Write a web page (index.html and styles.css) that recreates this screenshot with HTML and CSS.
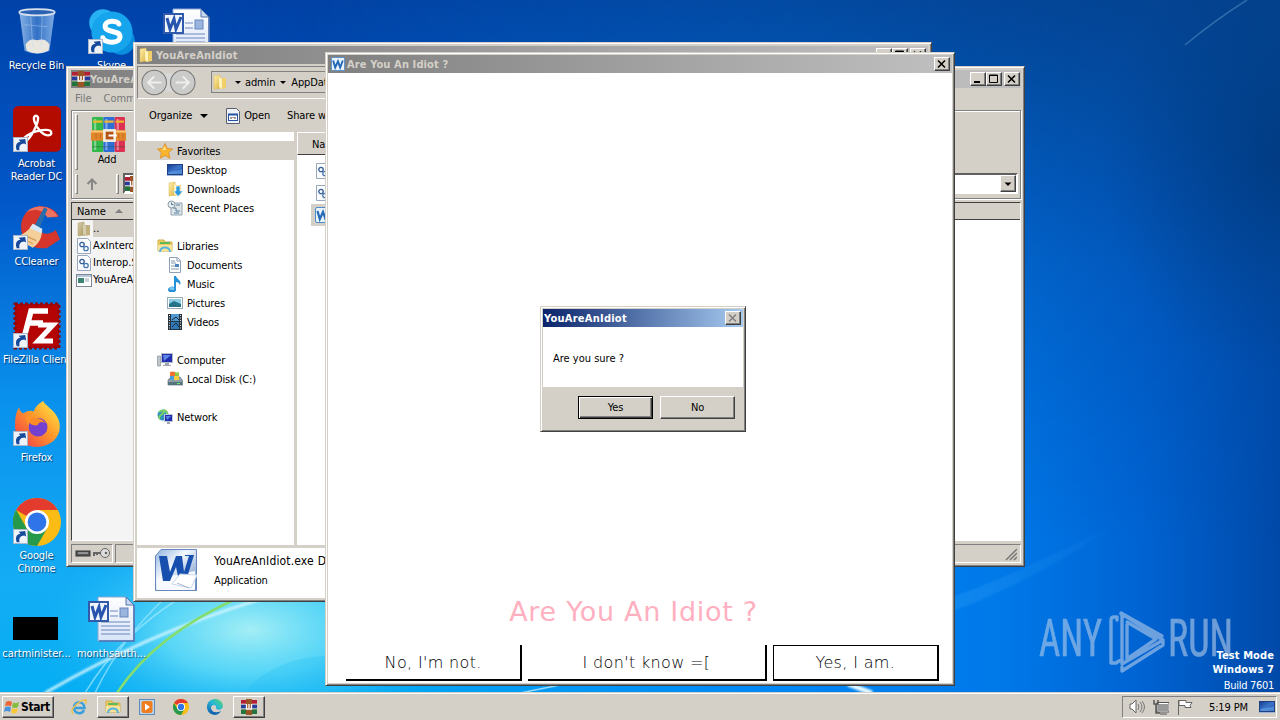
FILE: index.html
```html
<!DOCTYPE html>
<html lang="en">
<head>
    <meta charset="UTF-8">
    <meta name="viewport" content="width=device-width, initial-scale=1.0">
    <title>Desktop</title>
    <link rel="stylesheet" href="styles.css">
</head>
<body>
    <!-- icons -->
    <svg class="sprite" width="0" height="0">
        <defs>
            <linearGradient id="gFolder" x1="0" x2="1" y2="1"><stop offset="0" stop-color="#fff3ae"/><stop offset="1" stop-color="#d9ad3c"/></linearGradient>
            <linearGradient id="gScreen" x1="0" y1="0" x2="1" y2="1"><stop offset="0" stop-color="#123b91"/><stop offset=".5" stop-color="#3b74c9"/><stop offset="1" stop-color="#1747a0"/></linearGradient>
            <linearGradient id="gPage" x1="0" x2="0" y2="1"><stop offset="0" stop-color="#fff"/><stop offset="1" stop-color="#d7e4f8"/></linearGradient>
            <linearGradient id="gFox" x1="1" y1="0" x2="0" y2="1"><stop offset="0" stop-color="#fff44f"/><stop offset=".45" stop-color="#ff9a2a"/><stop offset="1" stop-color="#f0304c"/></linearGradient>
            <linearGradient id="gEdge" x1="1" y1="0" x2="0" y2="1"><stop offset="0" stop-color="#5bd668"/><stop offset=".45" stop-color="#27b7d7"/><stop offset="1" stop-color="#0c59a4"/></linearGradient>
            <linearGradient id="gBin" x1="0" x2="1"><stop offset="0" stop-color="#a9cdf4"/><stop offset=".5" stop-color="#3f7ccc"/><stop offset="1" stop-color="#9dc5f1"/></linearGradient>
            <linearGradient id="gWord" x1="0" y1="0" x2="1" y2="1"><stop offset="0" stop-color="#8fb2e0"/><stop offset=".4" stop-color="#f2f7fd"/><stop offset="1" stop-color="#5f86c0"/></linearGradient>
        </defs>
        <symbol id="shortcut" viewBox="0 0 16 16"><rect x=".5" y=".5" width="15" height="15" fill="#eef3fa" stroke="#a9b7ca"/><path d="M4 14c-2-5 0-9 4-9L6 3l7-1 1 6-2-1c-4 0-6 3-5 7z" fill="#17499b"/></symbol>
        <symbol id="bin" viewBox="0 0 40 46"><path d="M3 3l5 38q12 6 24 0l5-38z" fill="url(#gBin)" opacity=".8"/><path d="M9 35q4-7 11-4 8-3 12 4l-1 6q-11 5-21 0z" fill="#e9e6df"/><path d="M14 8l2 30M25 8l-1 30M8 16l22 2" stroke="#c4dcf8" opacity=".4" fill="none"/><ellipse cx="20" cy="4" rx="17" ry="3" fill="#2c62b4" stroke="#d8e2ee" stroke-width="1.6"/></symbol>
        <symbol id="skype" viewBox="0 0 42 42"><circle cx="13" cy="13" r="12" fill="#27b3f3"/><circle cx="29" cy="29" r="12" fill="#0a8fdf"/><circle cx="21" cy="21" r="18" fill="#16a5ec"/><path d="M27 14c-1-3-12-4-12 2 0 6 13 3 13 9 0 7-14 6-15 1" fill="none" stroke="#fff" stroke-width="4.4" stroke-linecap="round"/></symbol>
        <symbol id="doc" viewBox="0 0 48 48"><path d="M10 1h28l8 8v36H10z" fill="url(#gPage)" stroke="#8aa5d2"/><path d="M38 1v8h8z" fill="#c7d8f3" stroke="#5572a8"/><path d="M46 9v36H11" fill="none" stroke="#4a6fb0" stroke-width="1.5"/><path d="M13 26h29M13 30h29M13 34h29M13 38h29M22 15h8M22 20h8" stroke="#6b86bd"/><rect x="32" y="12" width="8" height="9" fill="#9ab5dd" stroke="#6685bd"/><rect x="1" y="6" width="19" height="19" fill="#f0f4fb" stroke="#315aa8" stroke-width="2"/><path d="M4 10l3 11 4-10 2 10 5-12" fill="none" stroke="#2755ae" stroke-width="3"/></symbol>
        <symbol id="acrobat" viewBox="0 0 44 44"><rect width="44" height="42" rx="5" fill="#b30b00"/><path d="M21 9c-4 0-1 9 4 14 6 6 11 4 10 1-1-4-14-2-22 3-6 4-5 8-2 6 5-3 12-16 12-22 0-1-1-2-2-2z" fill="none" stroke="#fff" stroke-width="2.2"/></symbol>
        <symbol id="ccleaner" viewBox="0 0 46 46"><path d="M44 12C37-2 12-2 8 18c-2 16 10 27 25 24l12-8-4-9c-8 7-18 3-18-5 0-9 9-13 15-7z" fill="#d5352a"/><path d="M43 12C36 0 20 0 13 8c8-4 15-3 20 5z" fill="#ee7263"/><path d="M30 3l3 2-8 19-5-2z" fill="#286dac"/><path d="M19 19l9 5c0 8-3 14-9 18L1 32c8-2 14-6 18-13z" fill="#f5cf99"/><path d="M19 19l9 5-1 4-11-5z" fill="#d9e8f6"/><path d="M7 32l12 6M11 30l11 5" stroke="#c98e49"/></symbol>
        <symbol id="filezilla" viewBox="0 0 48 48"><rect x="2" y="2" width="44" height="44" fill="#b40404" stroke="#8b0a10" stroke-width="3" stroke-dasharray="3 2"/><path d="M11 36L18 9h17M15 21h15" fill="none" stroke="#fff" stroke-width="5.5"/><path d="M25 23h15L25 39h15" fill="none" stroke="#fff" stroke-width="5"/></symbol>
        <symbol id="firefox" viewBox="0 0 46 46"><path d="M29 1c2 5 12 9 15 19 4 14-7 25-21 25C10 45 1 36 2 23 2 17 3 11 6 7c0 3 2 5 4 6 4-3 7-3 10-2C21 7 25 3 29 1z" fill="url(#gFox)"/><path d="M12 16c5-1 8 1 11 3-5 2-7 4-8 8" fill="#ff9229"/><circle cx="24" cy="26" r="9" fill="#7340cf"/><path d="M15 20c4-4 12-4 16 2-4-2-7 0-7 2-4 1-8 0-9-4z" fill="#fb8d28"/></symbol>
        <symbol id="chrome" viewBox="0 0 48 48"><circle cx="24" cy="24" r="24" fill="#fbbc16"/><path d="M24 24L3.2 12A24 24 0 0 1 44.8 12z" fill="#e33b2e"/><path d="M3.2 12A24 24 0 0 0 24 48L34.4 30 24 24 13.6 30z" fill="#27994a"/><path d="M24 12h20.8L34 30z" fill="#fbbc16"/><circle cx="24" cy="24" r="12" fill="#fff"/><circle cx="24" cy="24" r="9.4" fill="#2f74e8"/></symbol>
        <symbol id="winrar" viewBox="0 0 34 34"><rect x="1" width="11" height="34" rx="1" fill="#35b84b"/><rect x="12" width="11" height="34" rx="1" fill="#2e6fd6"/><rect x="23" width="10" height="34" rx="1" fill="#dd3152"/><path d="M4 2v30M15 2v30M26 2v30" stroke="#fff" opacity=".4" stroke-width="2"/><path d="M2 4.500h9M13 4.500h9M24 4.500h8" stroke="#f0b52e" stroke-width="2"/><path d="M1 29h32" stroke="#164c37" opacity=".4"/><rect y="13" width="34" height="10" fill="#e0862b"/><path d="M0 14h34" stroke="#ffc575" stroke-width="2"/><path d="M5 16v5M9 16v5M27 16v5M31 16v5" stroke="#c96c1d"/><rect x="13" y="13" width="10" height="10" fill="#b45218" stroke="#f4eee0" stroke-width="2.5"/><path d="M17 18h8" stroke="#fff" stroke-width="2"/></symbol>
        <symbol id="rar" viewBox="0 0 16 16" preserveAspectRatio="none"><path d="M0 1h16v4H0z" fill="#b51f36"/><path d="M0 5.5h16v4H0z" fill="#283c9e"/><path d="M0 10h16v5H0z" fill="#23743c"/><path d="M0 5h16M0 10h16" stroke="#e2dbc9" stroke-width=".7"/><rect x="5" width="6" height="16" fill="#9a5527"/><path d="M5.500 5v5h5V5M8 5v4" fill="none" stroke="#fff" stroke-width="1.300"/></symbol>
        <symbol id="folder" viewBox="0 0 16 16"><path d="M2 2l6-1 1 13-7 1z" fill="url(#gFolder)" stroke="#dcb957" stroke-width=".5"/><path d="M8 4h6v10l-6 1z" fill="#f0cf6b"/><path d="M7 3l3 2v10l-3-2z" fill="#fff2b9"/></symbol>
        <symbol id="star" viewBox="0 0 16 16"><path d="M8 .5l2.300 5 5.300.5-4 3.600 1.200 5.600L8 12.400l-4.800 2.800 1.200-5.600-4-3.600 5.300-.5z" fill="#fbb52d" stroke="#db8a1e" stroke-width=".8"/><path d="M8 3l1 4H5z" fill="#ffe28a"/></symbol>
        <symbol id="desk" viewBox="0 0 16 16"><rect x=".5" y="2.500" width="15" height="10" fill="url(#gScreen)" stroke="#1e3f82"/><path d="M1 11c5-3 8-1 14-4v5H1z" fill="#69a7e9" opacity=".6"/><path d="M0 13h16v1H0z" fill="#9db3d6"/></symbol>
        <symbol id="down" viewBox="0 0 16 16"><use href="#folder"/><path d="M9 5h4v5h3l-5 5.500L6.500 10H9z" fill="#2c9add" stroke="#fff" stroke-width=".6"/></symbol>
        <symbol id="recent" viewBox="0 0 16 16"><path d="M4 3h11v12H4z" fill="#dce4e8" stroke="#92a4b0"/><path d="M6 8h3v3h4M9 5h4M7 13h5" stroke="#577c9e" fill="none"/><circle cx="4.500" cy="4.500" r="3.500" fill="#e5eef2" stroke="#8b9aa4"/><path d="M4.500 2.500v2h2" stroke="#54718b" fill="none"/></symbol>
        <symbol id="libs" viewBox="0 0 16 16"><path d="M1 2h6l1 2h7v9H1z" fill="#f0cc60" stroke="#cfae4c"/><path d="M3 4h10v2H3z" fill="#61b859"/><path d="M1 7h14v6H1z" fill="#f7e39a"/><path d="M3 14c0-6 10-6 10 0" fill="none" stroke="#58b3dd" stroke-width="2"/></symbol>
        <symbol id="page" viewBox="0 0 16 16"><path d="M2.500.5h8l3 3v12h-11z" fill="#fff" stroke="#8ea0b5"/><path d="M10 1v3h3M4 4h4M4 6h5M4 9h4M4 12h8" stroke="#8398b1" fill="none"/><rect x="8" y="7" width="4" height="3" fill="#4b85c2"/></symbol>
        <symbol id="music" viewBox="0 0 16 16"><path d="M7 0h2c1 4 6 4 4 9-1-2-2-3-4-3v7a4 3 0 1 1-2-2z" fill="#2390d7"/><ellipse cx="5" cy="12.500" rx="2.500" ry="1.500" fill="#7bc9f3"/></symbol>
        <symbol id="pics" viewBox="0 0 16 16"><rect x=".5" y="2.500" width="15" height="11" fill="#fff" stroke="#9ba8b5"/><path d="M2 4h12v8H2z" fill="#8ccbe6"/><path d="M2 9l5-3 7 3v3H2z" fill="#24738a"/></symbol>
        <symbol id="video" viewBox="0 0 16 16"><rect x="1" width="14" height="16" fill="#26323c"/><path d="M4 0h8v7H4z" fill="#4e99d1"/><path d="M4 8h8v7H4z" fill="#2d79b9"/><path d="M2.500 1v15M13.500 1v15" stroke="#dce5ec" stroke-dasharray="1 1.500"/><path d="M5 6l4-3 3 3M5 13l4-4 3 4" stroke="#202b36" fill="none"/></symbol>
        <symbol id="computer" viewBox="0 0 16 16"><path d="M.5 4h3v10h-3z" fill="#bfc7ce" stroke="#8b949c" stroke-width=".7"/><rect x="4.500" y="1.500" width="11" height="9" fill="#202eae" stroke="#b4bdcc"/><path d="M6 3h8L7 9z" fill="#5d84e5"/><path d="M8 11h4v2h2v1H6v-1h2z" fill="#9da6b1"/></symbol>
        <symbol id="disk" viewBox="0 0 16 16"><path d="M1 9l3-3h9l3 4v4H1z" fill="#8fa0a5" stroke="#61747d" stroke-width=".7"/><path d="M1 11h14v3H1z" fill="#54757d"/><path d="M10 12.500h3" stroke="#67ec69"/><path d="M3 1q3-1 5 0v4H3z" fill="#ef7231"/><path d="M8 1q2 1 4 0v4H8z" fill="#8dc84a"/><path d="M3 5h4v4H3z" fill="#4a9bdf"/><path d="M7 5h5v4H7z" fill="#f7cb3b"/></symbol>
        <symbol id="net" viewBox="0 0 16 16"><circle cx="6" cy="6" r="5.500" fill="#2f91bb"/><path d="M2 3q4-3 5 0l-3 3q-3 2-1 4M7 1q4 2 3 5" fill="none" stroke="#7ed06a" stroke-width="2"/><rect x="7.500" y="5.500" width="8" height="7" fill="#202eae" stroke="#c1cbd9"/><path d="M9 7h5l-4 4z" fill="#5d84e5"/><path d="M10 13h3v2h-3z" fill="#9da6b1"/></symbol>
        <symbol id="dll" viewBox="0 0 16 16"><path d="M1.500.5h10l3 3v12h-13z" fill="#fafcff" stroke="#9aa8bd"/><circle cx="6" cy="6.500" r="2.200" fill="none" stroke="#365d96" stroke-width="1.300"/><circle cx="10" cy="10.500" r="2.200" fill="none" stroke="#4a78ad" stroke-width="1.300"/></symbol>
        <symbol id="exe" viewBox="0 0 16 16"><rect x=".5" y="2.500" width="15" height="12" fill="#fff" stroke="#7f8896"/><path d="M1 3h14v2H1z" fill="#b6c7db"/><path d="M2 6h6v5H2z" fill="#3d8573"/><path d="M9 7h4M9 9h4" stroke="#9ba7b6"/></symbol>
        <symbol id="wordapp" viewBox="0 0 42 42"><path d="M6 .5h35.500v41H.5V7z" fill="url(#gWord)" stroke="#6687bd"/><path d="M2 30l38-8v19H2z" fill="#f7faff"/><path d="M4 7h8l3 16 6-16h6l2 16 5-16h-4V6h9l-8 26h-7l-3-14-6 14h-7z" fill="#174fae"/><path d="M25 25l17 1-6 13-19-4z" fill="#fff" stroke="#c8d5e9"/><path d="M22 34l12 5" stroke="#a4b9d7"/></symbol>
        <symbol id="wordsmall" viewBox="0 0 16 16"><rect x=".5" y=".5" width="15" height="15" rx="1.500" fill="#eaf4fd" stroke="#4c8bcc"/><path d="M2.500 4l2.300 8L8 5l2.500 7L13.500 4" fill="none" stroke="#2369b7" stroke-width="2.200"/></symbol>
        <symbol id="winapp" viewBox="0 0 16 16"><path d="M1.500.5h10l3 3v12h-13z" fill="#eef2f8" stroke="#59616e"/><rect x="3.500" y="6.500" width="9" height="6" fill="#fff" stroke="#2351a1"/><path d="M3 6.500h10" stroke="#2351a1" stroke-width="2"/><path d="M6 9v2M8 9v1M10 9v2" stroke="#333"/></symbol>
        <symbol id="flagwin" viewBox="0 0 16 16"><path d="M2 3q3-2 6 0L7 7.500q-3-2-6 0z" fill="#ed6436"/><path d="M9 3.500q3 1.500 6-.5l-1 5q-3 2-6 0z" fill="#83bc3e"/><path d="M1 8.500q3-2 6 0L6 13q-3-2-6 0z" fill="#4694df"/><path d="M8 9q3 2 6 0l-1 4.500q-3 2-6 0z" fill="#fac739"/></symbol>
        <symbol id="ie" viewBox="0 0 16 16"><path d="M13 11c-2 5-10 4-10-2.500C3 2 13 1 13.500 9H4" fill="none" stroke="#3a9fdd" stroke-width="2.500"/><path d="M2 15C-2 11 8 1 15 1c1 1 0 3-1 4" fill="none" stroke="#ecc04c" stroke-width="1.400"/></symbol>
        <symbol id="media" viewBox="0 0 16 16"><rect x=".5" y=".5" width="15" height="15" fill="#b9d5ef" stroke="#5f8bb9"/><rect x="2.500" y="2" width="11" height="12" rx="2" fill="#ee7e1f"/><path d="M6 4.500l5 3.500-5 3.500z" fill="#fff"/></symbol>
        <symbol id="edge" viewBox="0 0 16 16"><path d="M0 8C0-2 15-3 16 7c0 4-6 5-7 2 1-4-5-4-5 0 0 4 5 6 10 3-4 7-14 4-14-4z" fill="url(#gEdge)"/><path d="M4 9c0 4 5 6 10 3-3 5-9 4-11 0z" fill="#1760b0"/></symbol>
        <symbol id="close" viewBox="0 0 12 10"><path d="M2 1.500l7 7M9 1.500l-7 7" stroke="currentColor" stroke-width="1.600"/></symbol>
        <symbol id="max" viewBox="0 0 12 10"><path d="M1.500 1h8v7.500h-8zM1 1.500h9" fill="none" stroke="#000"/></symbol>
        <symbol id="min" viewBox="0 0 12 10"><path d="M2 8h6" stroke="#000" stroke-width="2"/></symbol>
        <symbol id="drop" viewBox="0 0 8 8"><path d="M.5 2.500h7L4 6z"/></symbol>
    </svg>

    <div class="desktop">
        <svg class="wallpaper" viewBox="0 0 1280 720" preserveAspectRatio="none">
            <defs>
                <linearGradient id="wBase" x2="0" y2="1"><stop offset="0" stop-color="#0042a8"/><stop offset=".28" stop-color="#0257c8"/><stop offset=".55" stop-color="#0990ed"/><stop offset=".8" stop-color="#14acf5"/><stop offset="1" stop-color="#02aef2"/></linearGradient>
                <linearGradient id="wRight"><stop offset="0" stop-color="#0084f5" stop-opacity="0"/><stop offset=".5" stop-color="#0086f5"/><stop offset=".72" stop-color="#0078e8"/><stop offset=".86" stop-color="#0063d2"/><stop offset="1" stop-color="#0049a8"/></linearGradient>
                <linearGradient id="wTop" x2="0" y2="1"><stop offset="0" stop-color="#04438f"/><stop offset=".15" stop-color="#034794" stop-opacity=".8"/><stop offset=".4" stop-color="#034ba6" stop-opacity=".5"/><stop offset=".75" stop-color="#0050b0" stop-opacity="0"/></linearGradient>
                <linearGradient id="wFade"><stop offset="0" stop-color="#000"/><stop offset=".7" stop-color="#bbb"/><stop offset="1" stop-color="#fff"/></linearGradient>
                <linearGradient id="wFadeDown" x2="0" y2="1"><stop offset="0" stop-color="#444"/><stop offset=".45" stop-color="#fff"/></linearGradient>
                <mask id="mDown" maskUnits="userSpaceOnUse" x="0" y="0" width="1280" height="720"><rect width="1280" height="720" fill="url(#wFadeDown)"/></mask>
                <mask id="mRight" maskUnits="userSpaceOnUse" x="0" y="0" width="1280" height="720"><rect x="200" width="1080" height="720" fill="url(#wFade)"/></mask>
                <radialGradient id="wGlow"><stop offset="0" stop-color="#a3eef5"/><stop offset=".4" stop-color="#62dcf8" stop-opacity=".85"/><stop offset="1" stop-color="#10b1f6" stop-opacity="0"/></radialGradient>
                <radialGradient id="wDark"><stop offset="0" stop-color="#003575" stop-opacity=".7"/><stop offset="1" stop-color="#003b80" stop-opacity="0"/></radialGradient>
                <linearGradient id="wRay"><stop offset="0" stop-color="#2fa0f5" stop-opacity=".35"/><stop offset="1" stop-color="#2fa0f5" stop-opacity="0"/></linearGradient>
                <filter id="soft"><feGaussianBlur stdDeviation="1"/></filter>
            </defs>
            <rect width="1280" height="720" fill="url(#wBase)"/>
            <rect x="300" width="980" height="720" fill="url(#wRight)" mask="url(#mDown)"/>
            <rect x="200" width="1080" height="720" fill="url(#wTop)" mask="url(#mRight)"/>
            <ellipse cx="1290" cy="160" rx="190" ry="220" fill="url(#wDark)"/>
            <ellipse cx="250" cy="630" rx="220" ry="110" fill="url(#wGlow)"/>
            <path d="M1185 45Q1215 20 1247 0" stroke="#5a96c5" stroke-width="1.500" opacity=".5" fill="none"/>
            <path d="M940 602Q1040 565 1130 515Q1040 580 940 616z" fill="url(#wRay)" filter="url(#soft)"/>
            <path d="M45 693Q150 632 265 598" stroke="#d4f6ff" stroke-width="3" opacity=".9" fill="none" filter="url(#soft)"/>
            <path d="M85 693Q120 635 180 598M95 693Q120 640 165 598" stroke="#9ee8ff" stroke-width="1.500" opacity=".7" fill="none"/>
            <path d="M117 693Q155 635 238 598" stroke="#83dd6f" stroke-width="2.500" fill="none"/>
            <path d="M245 693C260 672 290 657 326 656V693z" fill="#20bbf3" opacity=".25"/>
            <path d="M520 693L560 685" stroke="#9adcff" stroke-width="1.500"/>
            <path d="M848 684L872 693" stroke="#e6faff" stroke-width="5" filter="url(#soft)"/>
        </svg>

        <div class="icons">
            <div class="icon"><svg class="pic bin"><use href="#bin"/></svg><span>Recycle Bin</span></div>
            <div class="icon"><svg class="pic"><use href="#skype"/></svg><svg class="arrow"><use href="#shortcut"/></svg><span>Skype</span></div>
            <div class="icon"><svg class="pic"><use href="#doc"/></svg></div>
            <div class="icon"><svg class="pic"><use href="#acrobat"/></svg><svg class="arrow"><use href="#shortcut"/></svg><span>Acrobat<br>Reader DC</span></div>
            <div class="icon first"><svg class="pic"><use href="#ccleaner"/></svg><svg class="arrow"><use href="#shortcut"/></svg><span>CCleaner</span></div>
            <div class="icon first"><svg class="pic"><use href="#filezilla"/></svg><svg class="arrow"><use href="#shortcut"/></svg><span>FileZilla Client</span></div>
            <div class="icon first"><svg class="pic"><use href="#firefox"/></svg><svg class="arrow"><use href="#shortcut"/></svg><span>Firefox</span></div>
            <div class="icon first"><svg class="pic"><use href="#chrome"/></svg><svg class="arrow"><use href="#shortcut"/></svg><span>Google<br>Chrome</span></div>
            <div class="icon first"><div class="pic black"></div><span class="wide">cartminister...</span></div>
            <div class="icon"><svg class="pic"><use href="#doc"/></svg><span class="wide">monthsauth...</span></div>
        </div>

        <div class="watermark">
            <svg viewBox="0 0 200 70">
                <text x="3" y="50" textLength="63" lengthAdjust="spacingAndGlyphs">ANY</text>
                <text x="132" y="50" textLength="65" lengthAdjust="spacingAndGlyphs">RUN</text>
                <path d="M81 14v-3h-3q-3 0-3 3v43h5l6-4M86 8v50l41-24zM86 8l-1 0 0-1 41 23M91 16l29 17-29 20v-34M86 61v4l41-26v-5"/>
            </svg>
        </div>
        <div class="build"><b>Test Mode</b><b>Windows 7</b><span>Build 7601</span></div>

        <!-- WinRAR -->
        <div class="window rar-win">
            <div class="titlebar inactive"><svg class="i18"><use href="#rar"/></svg><span>YouAreAnIdiot</span>
                <div class="tools"><button><svg><use href="#min"/></svg></button><button><svg><use href="#max"/></svg></button><button class="x"><svg><use href="#close"/></svg></button></div>
            </div>
            <div class="menu"><span>File</span><span>Commands</span></div>
            <div class="rar-tools">
                <div class="rar-row big"><i class="grip"></i><div class="add"><svg><use href="#winrar"/></svg><span>Add</span></div></div>
                <div class="rar-row"><i class="grip"></i><svg class="up" viewBox="0 0 12 12"><path d="M6 12V2M1.500 6L6 1.500 10.500 6" fill="none" stroke="#858585" stroke-width="2"/></svg><i class="grip"></i>
                    <div class="combo"><svg class="i16"><use href="#rar"/></svg><button><svg><use href="#drop"/></svg></button></div></div>
            </div>
            <div class="rar-list">
                <div class="rar-head">Name <i></i></div>
                <div class="rar-body">
                    <div class="rar-names">
                        <div class="sel"><svg class="i16"><use href="#folder"/></svg>..</div>
                        <div><svg class="i16"><use href="#dll"/></svg>AxInterop</div>
                        <div><svg class="i16"><use href="#dll"/></svg>Interop.S</div>
                        <div><svg class="i16"><use href="#exe"/></svg>YouAreAnIdiot</div>
                    </div>
                </div>
            </div>
            <div class="rar-status">
                <div class="cell"><svg viewBox="0 0 36 12"><rect x="1" y="4" width="14" height="5" fill="#555" stroke="#333"/><path d="M3 6h10" stroke="#ccc"/><circle cx="30" cy="6" r="4.500" fill="#ddd" stroke="#666"/><path d="M26 6H19v3M22 6v2" stroke="#666" stroke-width="2" fill="none"/><circle cx="31" cy="6" r="1.300" fill="#666"/></svg></div>
                <div class="cell wide"><svg class="resize" viewBox="0 0 12 12"><path d="M1 12L12 1M5 12l7-7M9 12l3-3" stroke="#777" stroke-width="1.500"/></svg></div>
            </div>
        </div>

        <!-- Explorer -->
        <div class="window explorer">
            <div class="titlebar inactive"><svg class="i16"><use href="#folder"/></svg><span>YouAreAnIdiot</span>
                <div class="tools"><button><svg><use href="#min"/></svg></button><button><svg><use href="#max"/></svg></button><button class="x"><svg><use href="#close"/></svg></button></div>
            </div>
            <div class="address">
                <svg class="nav-btn" viewBox="0 0 54 26"><path d="M14 4h28v18H14z" fill="#d8d8d8"/><g fill="#cbcbca" stroke="#777"><circle cx="13" cy="13" r="12"/><circle cx="41" cy="13" r="12"/></g><g fill="none" stroke="#eee" stroke-width="2"><path d="M20 13H8M13 7l-6 6 6 6M34 13h12M41 7l6 6-6 6"/></g></svg>
                <div class="path"><svg class="i16"><use href="#folder"/></svg><i></i><span>admin</span><i></i><span>AppData</span></div>
            </div>
            <div class="commands"><span>Organize</span><i></i><svg class="i16"><use href="#winapp"/></svg><span>Open</span><span class="share">Share with</span></div>
            <div class="panes">
                <div class="tree">
                    <div class="group open"><svg class="i16"><use href="#star"/></svg>Favorites</div>
                    <div class="leaf"><svg class="i16"><use href="#desk"/></svg>Desktop</div>
                    <div class="leaf"><svg class="i16"><use href="#down"/></svg>Downloads</div>
                    <div class="leaf"><svg class="i16"><use href="#recent"/></svg>Recent Places</div>
                    <div class="group gap"><svg class="i16"><use href="#libs"/></svg>Libraries</div>
                    <div class="leaf"><svg class="i16"><use href="#page"/></svg>Documents</div>
                    <div class="leaf"><svg class="i16"><use href="#music"/></svg>Music</div>
                    <div class="leaf"><svg class="i16"><use href="#pics"/></svg>Pictures</div>
                    <div class="leaf"><svg class="i16"><use href="#video"/></svg>Videos</div>
                    <div class="group gap"><svg class="i16"><use href="#computer"/></svg>Computer</div>
                    <div class="leaf"><svg class="i16"><use href="#disk"/></svg>Local Disk (C:)</div>
                    <div class="group gap"><svg class="i16"><use href="#net"/></svg>Network</div>
                </div>
                <div class="files">
                    <div class="files-head">Name</div>
                    <div class="file"><svg class="i16"><use href="#dll"/></svg></div>
                    <div class="file"><svg class="i16"><use href="#dll"/></svg></div>
                    <div class="file sel"><svg class="i16"><use href="#wordsmall"/></svg></div>
                </div>
            </div>
            <div class="details"><svg><use href="#wordapp"/></svg><div><p class="fname">YouAreAnIdiot.exe</p><p>Application</p></div><span class="clip">D</span></div>
        </div>

        <!-- main app -->
        <div class="window app">
            <div class="titlebar inactive"><svg class="i14"><use href="#wordsmall"/></svg><span>Are You An Idiot ?</span>
                <div class="tools"><button class="x"><svg><use href="#close"/></svg></button></div>
            </div>
            <div class="app-body">
                <h1>Are You An Idiot ?</h1>
                <div class="answers">
                    <button class="a-no">No, I'm not.</button>
                    <button class="a-maybe">I don't know =[</button>
                    <button class="a-yes">Yes, I am.</button>
                </div>
            </div>
        </div>

        <!-- message box -->
        <div class="window dialog">
            <div class="titlebar"><span>YouAreAnIdiot</span><div class="tools"><button class="x off"><svg><use href="#close"/></svg></button></div></div>
            <div class="message">Are you sure ?</div>
            <div class="actions"><button class="default">Yes</button><button>No</button></div>
        </div>
    </div>

    <div class="taskbar">
        <button class="start"><svg><use href="#flagwin"/></svg>Start</button>
        <div class="quick">
            <div class="task"><svg><use href="#ie"/></svg></div>
            <div class="task running"><svg><use href="#libs"/></svg></div>
            <div class="task"><svg><use href="#media"/></svg></div>
            <div class="task"><svg><use href="#chrome"/></svg></div>
            <div class="task"><svg><use href="#edge"/></svg></div>
            <div class="task running"><svg><use href="#rar"/></svg></div>
        </div>
        <div class="tray">
            <svg viewBox="0 0 16 16"><path d="M1 5h2l4-4v13l-4-4H1z" fill="#fff" stroke="#666"/><path d="M9 5q2 3 0 6M11 3q4 5 0 10M13 2q5 6 0 12" fill="none" stroke="#777"/></svg>
            <svg viewBox="0 0 16 16"><rect x="4.500" y="4.500" width="11" height="8" fill="#999" stroke="#fff"/><path d="M4 3.500h12v9.500H4zM7 15h7" fill="none" stroke="#555"/><path d="M1 1v4h4V1M3 5v9h4" fill="none" stroke="#555" stroke-width="1.500"/></svg>
            <svg viewBox="0 0 16 16"><path d="M1.500 1v15M2 1.500h7v2h6l-2 3 1 2H8v-2H2z" fill="#fff" stroke="#666"/></svg>
            <span>5:19 PM</span>
            <svg class="show"><use href="#desk"/></svg>
        </div>
    </div>
</body>
</html>
```
FILE: styles.css
```css
* {
    box-sizing: border-box;
}
body {
    margin: 0;
    width: 1280px;
    height: 720px;
    overflow: hidden;
    display: flex;
    flex-direction: column;
    font-family: "DejaVu Sans Condensed", "DejaVu Sans", sans-serif;
    font-stretch: condensed;
    font-size: 11px;
    letter-spacing: -0.14px;
    line-height: 13px;
    color: #000;
}
p, h1 {
    margin: 0;
}
svg {
    display: block;
    flex: none;
}
button {
    font: inherit;
    letter-spacing: inherit;
    color: inherit;
    padding: 0;
    border: 1px solid;
    border-color: #fff #404040 #404040 #fff;
    box-shadow: inset -1px -1px #808080;
    background: #d4d0c8;
}
.sprite {
    position: absolute;
}
.i14 { width: 14px; height: 14px; }
.i16 { width: 16px; height: 16px; }
.i18 { width: 18px; height: 16px; }

.desktop {
    position: relative;
    height: 692px;
    overflow: hidden;
}
.wallpaper {
    position: absolute;
    width: 1280px;
    height: 720px;
}

/* desktop icons */
.icons {
    position: relative;
    display: grid;
    grid-template-columns: 75px 75px 75px;
    grid-auto-rows: 98px;
    padding-top: 8px;
    width: 225px;
    margin-left: -1px;
}
.icon {
    position: relative;
    display: flex;
    flex-direction: column;
    align-items: center;
    color: #fff;
    text-align: center;
    white-space: nowrap;
}
.icon.first {
    grid-column: 1;
}
.icon .pic {
    width: 48px;
    height: 48px;
    margin-bottom: 3px;
}
.icon span {
    text-shadow: 1px 1px 1px rgba(0, 20, 60, 0.7);
}
.icon .wide {
    letter-spacing: 0;
}
.icon .arrow {
    position: absolute;
    left: 14px;
    top: 31px;
    width: 15px;
    height: 15px;
}
.icon .black {
    width: 45px;
    height: 23px;
    margin: 21px 2px 7px 0;
    background: #000;
}

.watermark {
    position: absolute;
    left: 1036px;
    top: 606px;
    opacity: 0.6;
}
.watermark svg {
    width: 200px;
    height: 70px;
    overflow: visible;
}
.watermark text {
    font-family: Roboto, sans-serif;
    font-size: 51px;
    letter-spacing: 0;
    fill: #b6cdea;
    stroke: #b6cdea;
    stroke-width: 0.6;
}
.watermark path {
    fill: none;
    stroke: #b6cdea;
    stroke-width: 3.4;
    stroke-linejoin: round;
    stroke-linecap: round;
}
.build {
    position: absolute;
    right: 6px;
    top: 649px;
    display: flex;
    flex-direction: column;
    align-items: flex-end;
    gap: 1px;
    color: #fff;
}
.build span {
    margin-top: 2px;
    letter-spacing: -0.3px;
}
.build b {
    letter-spacing: 0.1px;
}

/* windows */
.window {
    position: absolute;
    display: flex;
    flex-direction: column;
    padding: 2px;
    background: #d4d0c8;
    border: 1px solid;
    border-color: #d4d0c8 #404040 #404040 #d4d0c8;
    box-shadow: inset 1px 1px #fff, inset -1px -1px #808080;
}
.titlebar {
    flex: none;
    display: flex;
    align-items: center;
    height: 18px;
    padding: 0 2px;
    gap: 2px;
    font-weight: bold;
    letter-spacing: 0.15px;
    color: #fff;
    background: linear-gradient(to right, #0a246a, #a6caf0);
}
.titlebar.inactive {
    color: #d4d0c8;
    background: linear-gradient(to right, #808080, #c0c0c0);
}
.tools {
    display: flex;
    margin-left: auto;
}
.tools button {
    display: flex;
    align-items: center;
    justify-content: center;
    width: 16px;
    height: 14px;
    color: #000;
}
.tools .x {
    margin-left: 2px;
}
.tools .off {
    color: #808080;
}
.tools svg {
    width: 12px;
    height: 10px;
}

.rar-win {
    left: 66px;
    top: 66px;
    width: 959px;
    height: 501px;
    padding: 3px 3px 3px 4px;
}
.rar-win .titlebar {
    padding: 0 1px;
    gap: 0;
}
.menu {
    display: flex;
    gap: 12px;
    padding: 4px;
    height: 22px;
    color: #777;
    letter-spacing: 0;
}
.rar-tools {
    height: 89px;
    padding: 1px 2px;
    border: 1px solid #808080;
    box-shadow: inset 1px 1px #fff, 1px 1px #fff;
}
.rar-row {
    display: flex;
    align-items: center;
    height: 25px;
    padding-left: 1px;
}
.rar-row.big {
    height: 59px;
}
.grip {
    width: 3px;
    height: 20px;
    border: 1px solid;
    border-color: #fff #808080 #808080 #fff;
}
.big .grip {
    height: 56px;
}
.add {
    display: flex;
    flex-direction: column;
    align-items: center;
    margin-left: 13px;
    gap: 1px;
}
.add svg {
    width: 35px;
    height: 35px;
}
.add span {
    margin-right: 3px;
}
.up {
    width: 12px;
    height: 12px;
    margin: 0 18px 0 8px;
}
.combo {
    flex: 1;
    display: flex;
    align-items: center;
    height: 21px;
    margin-left: 4px;
    background: #fff;
    border: 2px solid;
    border-color: #606060 #fff #fff #606060;
}
.combo button {
    display: flex;
    align-items: center;
    justify-content: center;
    width: 16px;
    height: 17px;
    margin-left: auto;
}
.combo button svg {
    width: 8px;
    height: 8px;
}
.rar-list {
    flex: 1;
    display: flex;
    flex-direction: column;
    margin-top: 3px;
    border: 1px solid;
    border-color: #404040 #fff #fff #404040;
}
.rar-head {
    height: 17px;
    padding: 2px 5px;
    background: #d4d0c8;
    border-bottom: 1px solid #404040;
    letter-spacing: -0.1px;
}
.rar-head i {
    display: inline-block;
    margin: 0 0 2px 6px;
    border: 4px solid transparent;
    border-top: 0;
    border-bottom-color: #808080;
}
.rar-body {
    flex: 1;
    background: #fff;
}
.rar-names {
    height: 100%;
    width: 200px;
    background: #f4f4f4;
}
.rar-names div {
    display: flex;
    align-items: center;
    gap: 1px;
    height: 17px;
    padding-left: 4px;
    letter-spacing: 0;
}
.rar-names .sel {
    background: linear-gradient(to right, transparent 21px, #d4d0c8 21px);
}
.sel svg {
    filter: brightness(0.85) saturate(0.6);
}
.rar-status {
    display: flex;
    gap: 2px;
    height: 19px;
    margin-top: 3px;
}
.cell {
    width: 42px;
    padding: 2px 3px;
    border: 1px solid;
    border-color: #808080 #fff #fff #808080;
}
.cell svg {
    width: 36px;
    height: 12px;
}
.cell.wide {
    flex: 1;
}
.cell .resize {
    width: 12px;
    height: 14px;
    margin-left: auto;
}

.explorer {
    left: 133px;
    top: 42px;
    width: 799px;
    height: 560px;
    padding: 3px;
}
.explorer .titlebar {
    padding-left: 1px;
}
.address {
    display: flex;
    align-items: center;
    height: 33px;
    margin-top: 2px;
    padding-left: 3px;
    border: 1px solid;
    border-color: #808080 #fff #fff #808080;
}
.nav-btn {
    width: 55px;
    height: 27px;
}
.path {
    flex: 1;
    display: flex;
    align-items: center;
    height: 22px;
    margin: -1px 0 0 15px;
    border: 1px solid #808080;
}
.path i, .commands i {
    margin: 0 5px;
    border: 3px solid transparent;
    border-top-color: #000;
    border-bottom: 0;
}
.path i:first-of-type {
    margin: 0 4px 0 7px;
}
.commands {
    display: flex;
    align-items: center;
    height: 33px;
    padding-left: 12px;
}
.commands i {
    border-width: 4px;
    border-bottom: 0;
    margin: 0 17px 0 8px;
}
.commands span + .share {
    margin-left: 17px;
}
.commands svg + span {
    margin-left: 3px;
}
.panes {
    flex: 1;
    display: flex;
}
.tree {
    width: 157px;
    padding-top: 9px;
    background: #fff;
}
.tree div {
    display: flex;
    align-items: center;
    gap: 4px;
    height: 19px;
    padding-top: 1px;
}
.tree .group {
    padding-left: 20px;
}
.tree .leaf {
    padding-left: 30px;
}
.tree svg {
    margin-top: -1px;
}
.tree .open {
    background: #d4d0c8;
}
.tree .gap {
    margin-top: 19px;
}
.files {
    flex: 1;
    margin-left: 3px;
    background: #fff;
}
.files-head {
    height: 23px;
    padding: 5px 14px;
    background: #d4d0c8;
    border: 1px solid;
    border-color: #fff #808080 #404040 #fff;
    margin-bottom: 5px;
}
.file {
    display: flex;
    align-items: center;
    height: 22px;
    margin-left: 14px;
    padding-left: 4px;
}
.file.sel {
    background: #d4d0c8;
}
.file.sel svg {
    filter: none;
}
.details {
    display: flex;
    height: 50px;
    margin-top: 3px;
    padding-left: 18px;
    background: #fff;
}
.details svg {
    width: 42px;
    height: 42px;
    margin: 1px 17px 0 0;
}
.details p {
    margin-top: 6px;
}
.details .fname {
    margin-top: 7px;
    font-size: 12px;
    letter-spacing: 0.15px;
}
.details .clip {
    margin: 7px 0 0 4px;
    font-size: 12px;
}

.app {
    left: 325px;
    top: 52px;
    width: 630px;
    height: 634px;
}
.app .titlebar {
    padding-left: 3px;
    letter-spacing: 0.12px;
}
.app-body {
    flex: 1;
    display: flex;
    flex-direction: column;
    justify-content: flex-end;
    background: #fff;
    font-family: "DejaVu Sans", sans-serif;
    font-stretch: normal;
}
.app h1 {
    padding-right: 13px;
    margin-bottom: 16px;
    font-size: 27px;
    line-height: 34px;
    font-weight: normal;
    letter-spacing: 0.7px;
    text-align: center;
    color: #ffb0c0;
}
.answers {
    display: flex;
    gap: 6px;
    padding: 0 13px 2px 18px;
}
.answers button {
    height: 36px;
    background: #fff;
    border: solid #000;
    border-width: 0 2px 2px 0;
    box-shadow: none;
    font-size: 16px;
    font-weight: 200;
    letter-spacing: 0.35px;
}
.answers .a-no { width: 177px; }
.answers .a-maybe { width: 239px; }
.answers .a-yes {
    width: 167px;
    border-width: 1px 2px 2px 1px;
}

.dialog {
    left: 540px;
    top: 306px;
    width: 206px;
    height: 126px;
}
.dialog .titlebar {
    padding-left: 1px;
    letter-spacing: 0.25px;
}
.message {
    height: 60px;
    padding: 25px 10px;
    background: #fff;
    letter-spacing: 0;
}
.actions {
    display: flex;
    justify-content: flex-end;
    gap: 7px;
    padding: 9px 8px 0 0;
}
.actions button {
    width: 75px;
    height: 23px;
}
.actions .default {
    border-color: #000;
    box-shadow: inset 1px 1px #fff, inset -1px -1px #404040, inset -2px -2px #808080;
}

/* taskbar */
.taskbar {
    height: 28px;
    display: flex;
    align-items: center;
    padding: 2px 3px 0 2px;
    background: #d4d0c8;
    box-shadow: inset 0 1px #d4d0c8, inset 0 2px #fff;
}
.start {
    display: flex;
    align-items: center;
    gap: 1px;
    width: 52px;
    height: 22px;
    padding-left: 1px;
    font-weight: bold;
    font-size: 12px;
    letter-spacing: -0.4px;
}
.start svg {
    width: 16px;
    height: 16px;
}
.quick {
    display: flex;
    gap: 2px;
    margin-left: 9px;
}
.task {
    display: flex;
    align-items: center;
    justify-content: center;
    width: 32px;
    height: 22px;
}
.task svg {
    width: 16px;
    height: 16px;
}
.running {
    border: 1px solid;
    border-color: #fff #404040 #404040 #fff;
    box-shadow: inset -1px -1px #808080;
}
.tray {
    display: flex;
    align-items: center;
    gap: 8px;
    width: 155px;
    height: 22px;
    margin-left: auto;
    padding-left: 6px;
    border: 1px solid;
    border-color: #808080 #fff #fff #808080;
}
.tray svg {
    width: 16px;
    height: 16px;
}
.tray span {
    margin-left: 8px;
    white-space: nowrap;
}
.tray .show {
    margin-left: 3px;
}
```
